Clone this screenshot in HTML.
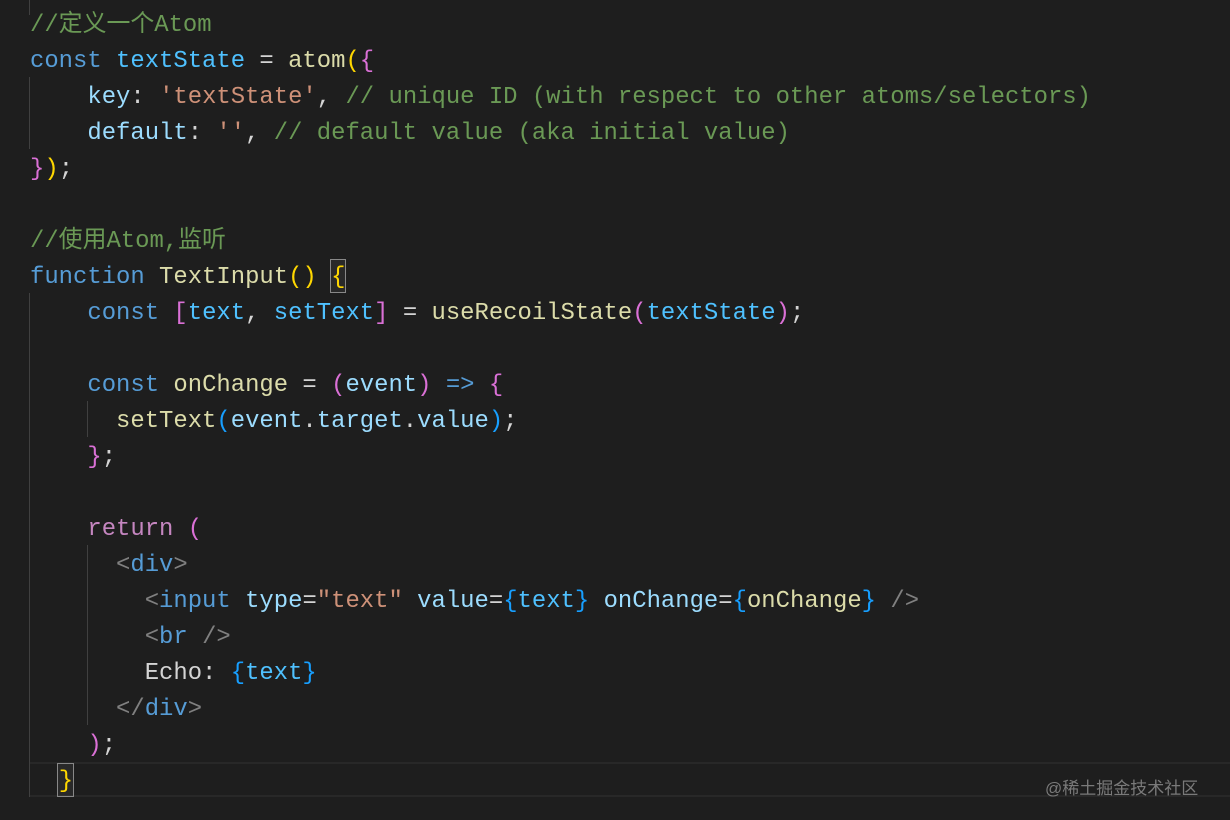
<!DOCTYPE html>
<html><head><meta charset="utf-8"><style>
html,body{margin:0;padding:0;background:#1e1e1e;width:1230px;height:820px;overflow:hidden;position:relative}
.code{position:absolute;left:30px;top:8px;font-family:"Liberation Mono","Noto Sans CJK SC",monospace;font-size:23.9px;line-height:36px;color:#d4d4d4}
.l{height:36px;white-space:pre}
.k{color:#569cd6}.v{color:#9cdcfe}.c{color:#4fc1ff}.f{color:#dcdcaa}.s{color:#ce9178}.cm{color:#6a9955}
.y{color:#ffd700}.p{color:#da70d6}.b{color:#179fff}.g{color:#808080}.r{color:#c586c0}
.gd{position:absolute;width:1px;background:#404040}
.hl{position:absolute;left:29px;right:0;top:762px;height:35px;border-top:2px solid #282828;border-bottom:2px solid #282828;box-sizing:border-box}
.box{position:absolute;border:1px solid #888;box-sizing:border-box;background:rgba(255,255,255,0.05)}
.wm{position:absolute;left:1045px;top:774px;font-family:"Liberation Sans","Noto Sans CJK SC",sans-serif;font-size:17px;color:#7a7a7a}
</style></head><body>
<div class="hl"></div>
<div class="gd" style="left:29px;top:0;height:15px"></div>
<div class="gd" style="left:29px;top:77px;height:72px"></div>
<div class="gd" style="left:29px;top:293px;height:504px"></div>
<div class="gd" style="left:87px;top:401px;height:36px"></div>
<div class="gd" style="left:87px;top:545px;height:180px"></div>
<div class="box" style="left:330px;top:259px;width:16px;height:34px"></div>
<div class="box" style="left:57px;top:763px;width:17px;height:34px"></div>
<div class="code"><div class="l"><span class="cm">//定义一个Atom</span></div><div class="l"><span class="k">const</span> <span class="c">textState</span> = <span class="f">atom</span><span class="y">(</span><span class="p">{</span></div><div class="l">    <span class="v">key</span>: <span class="s">'textState'</span>, <span class="cm">// unique ID (with respect to other atoms/selectors)</span></div><div class="l">    <span class="v">default</span>: <span class="s">''</span>, <span class="cm">// default value (aka initial value)</span></div><div class="l"><span class="p">}</span><span class="y">)</span>;</div><div class="l"> </div><div class="l"><span class="cm">//使用Atom,监听</span></div><div class="l"><span class="k">function</span> <span class="f">TextInput</span><span class="y">()</span> <span class="y">{</span></div><div class="l">    <span class="k">const</span> <span class="p">[</span><span class="c">text</span>, <span class="c">setText</span><span class="p">]</span> = <span class="f">useRecoilState</span><span class="p">(</span><span class="c">textState</span><span class="p">)</span>;</div><div class="l"> </div><div class="l">    <span class="k">const</span> <span class="f">onChange</span> = <span class="p">(</span><span class="v">event</span><span class="p">)</span> <span class="k">=&gt;</span> <span class="p">{</span></div><div class="l">      <span class="f">setText</span><span class="b">(</span><span class="v">event</span>.<span class="v">target</span>.<span class="v">value</span><span class="b">)</span>;</div><div class="l">    <span class="p">}</span>;</div><div class="l"> </div><div class="l">    <span class="r">return</span> <span class="p">(</span></div><div class="l">      <span class="g">&lt;</span><span class="k">div</span><span class="g">&gt;</span></div><div class="l">        <span class="g">&lt;</span><span class="k">input</span> <span class="v">type</span>=<span class="s">"text"</span> <span class="v">value</span>=<span class="b">{</span><span class="c">text</span><span class="b">}</span> <span class="v">onChange</span>=<span class="b">{</span><span class="f">onChange</span><span class="b">}</span> <span class="g">/&gt;</span></div><div class="l">        <span class="g">&lt;</span><span class="k">br</span> <span class="g">/&gt;</span></div><div class="l">        Echo: <span class="b">{</span><span class="c">text</span><span class="b">}</span></div><div class="l">      <span class="g">&lt;/</span><span class="k">div</span><span class="g">&gt;</span></div><div class="l">    <span class="p">)</span>;</div><div class="l">  <span class="y">}</span></div></div>
<div class="wm">@稀土掘金技术社区</div>
</body></html>
